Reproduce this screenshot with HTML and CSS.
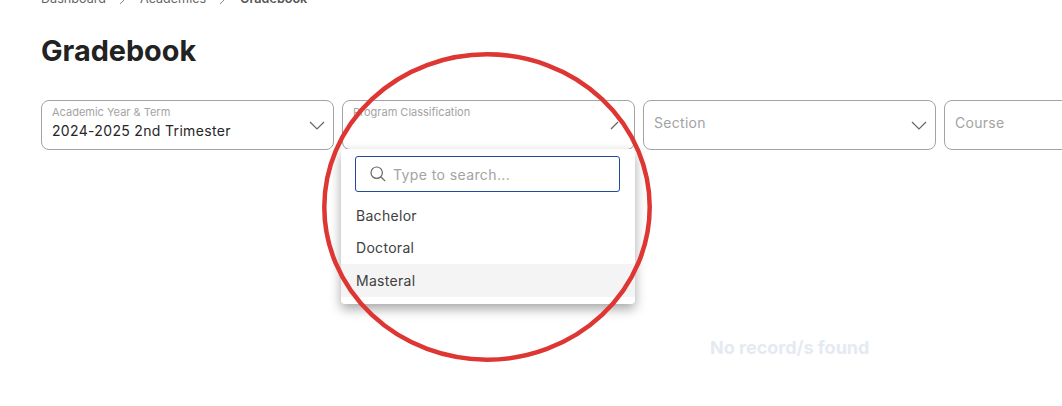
FILE: index.html
```html
<!DOCTYPE html>
<html lang="en">

<head>
  <meta charset="utf-8">
  <title>Gradebook</title>
  <link rel="stylesheet" href="styles.css">
</head>

<body>
  <div class="page">
    <nav class="crumbs">
      <span>Dashboard</span>
      <svg class="crumb-sep" viewBox="0 0 8 14"><path d="M1 1l6 6-6 6"/></svg>
      <span>Academics</span>
      <svg class="crumb-sep" viewBox="0 0 8 14"><path d="M1 1l6 6-6 6"/></svg>
      <span class="crumb-now">Gradebook</span>
    </nav>

    <h1 class="title">Gradebook</h1>

    <div class="filters">
      <div class="field">
        <span class="field-label">Academic Year &amp; Term</span>
        <span class="field-value">2024-2025 2nd Trimester</span>
        <svg class="chevron" viewBox="0 0 16 9"><path d="M1 1l7 7 7-7"/></svg>
      </div>

      <div class="field-wrap">
        <div class="field">
          <span class="field-label">Program Classification</span>
          <svg class="chevron" viewBox="0 0 16 9"><path d="M1 8l7-7"/></svg>
        </div>
        <div class="menu">
          <div class="search">
            <svg class="search-icon" viewBox="0 0 16 16"><circle cx="6.7" cy="6.7" r="5.7"/><path d="M11 11l4.2 4.2"/></svg>
            <span class="search-hint">Type to search...</span>
          </div>
          <ul class="options">
            <li>Bachelor</li>
            <li>Doctoral</li>
            <li class="hover">Masteral</li>
          </ul>
        </div>
      </div>

      <div class="field">
        <span class="field-hint">Section</span>
        <svg class="chevron" viewBox="0 0 16 9"><path d="M1 1l7 7 7-7"/></svg>
      </div>

      <div class="field">
        <span class="field-hint">Course</span>
      </div>
    </div>

    <p class="empty">No record/s found</p>
  </div>

  <!-- hand drawn annotation on top of the shot -->
  <svg class="circle" viewBox="0 0 334 314"><ellipse cx="167" cy="157" rx="162.7" ry="152.7"/></svg>
</body>

</html>
```

FILE: styles.css
```css
* {
  box-sizing: border-box;
}

html,
body {
  margin: 0;
  height: 100%;
  overflow: hidden;
  background: #fff;
}

body {
  position: relative;
  font-family: Inter, "Liberation Sans", sans-serif;
  color: #222;
}

.page {
  width: 1062px;
  height: 406px;
  padding: 0 0 0 41px;
  overflow: hidden;
}

.crumbs {
  display: flex;
  align-items: center;
  gap: 13px;
  height: 20px;
  margin-top: -12px;
  font-size: 12.6px;
  color: #666;
}

.crumb-sep {
  flex: none;
  width: 8px;
  height: 14px;
  fill: none;
  stroke: #888;
}

.crumb-now {
  font-weight: 600;
  color: #555;
}

.title {
  margin: 25px 0 0;
  font-size: 28.8px;
  line-height: 36px;
  font-weight: 700;
  color: #222;
}

.filters {
  display: flex;
  gap: 8px;
  width: 1200px;
  margin-top: 31px;
}

.field-wrap {
  position: relative;
  flex: none;
  width: 293px;
}

.field {
  position: relative;
  flex: none;
  width: 293px;
  height: 50px;
  padding: 5px 10px 0;
  border: 1px solid #a3a3a3;
  border-radius: 8px;
  background: #fff;
}

.field-label {
  display: block;
  font-size: 11px;
  line-height: 13px;
  color: #a3a3a3;
}

.field-value {
  display: block;
  margin-top: 2px;
  font-size: 14px;
  line-height: 20px;
  letter-spacing: 0.33px;
  color: #262626;
}

.field-hint {
  display: block;
  margin-top: 9px;
  font-size: 14px;
  line-height: 16px;
  letter-spacing: 0.3px;
  color: #a3a3a3;
}

.chevron {
  position: absolute;
  right: 8px;
  top: 20px;
  width: 16px;
  height: 9px;
  fill: none;
  stroke: #666;
  stroke-width: 1.2;
}

.menu {
  position: absolute;
  top: 49px;
  left: -1px;
  width: 294px;
  height: 155px;
  padding: 7px 15px 0 14px;
  background: #fff;
  border-radius: 4px;
  box-shadow: 0 5px 12px rgba(0, 0, 0, 0.35);
}

.search {
  display: flex;
  align-items: center;
  gap: 7px;
  height: 36px;
  padding-left: 14px;
  border: 1px solid #1e4b9c;
  border-radius: 3px;
}

.search-icon {
  flex: none;
  width: 16px;
  height: 16px;
  fill: none;
  stroke: #666;
  stroke-width: 1.2;
}

.search-hint {
  font-size: 14px;
  letter-spacing: 0.4px;
  color: #a3a3a3;
}

.options {
  list-style: none;
  margin: 8px -15px 0 -14px;
  padding: 0;
  font-size: 14px;
  letter-spacing: 0.3px;
  color: #404040;
}

.options li {
  height: 32px;
  padding: 0 15px;
  line-height: 32px;
}

.options .hover {
  height: 33px;
  line-height: 33px;
  background: #f4f4f4;
}

.empty {
  position: absolute;
  left: 710px;
  top: 338px;
  margin: 0;
  font-size: 18px;
  line-height: 20px;
  font-weight: 700;
  color: #e5eaf2;
}

.circle {
  position: absolute;
  left: 320px;
  top: 50px;
  width: 334px;
  height: 314px;
  fill: none;
  stroke: #dd3633;
  stroke-width: 4.5;
  pointer-events: none;
}
```
